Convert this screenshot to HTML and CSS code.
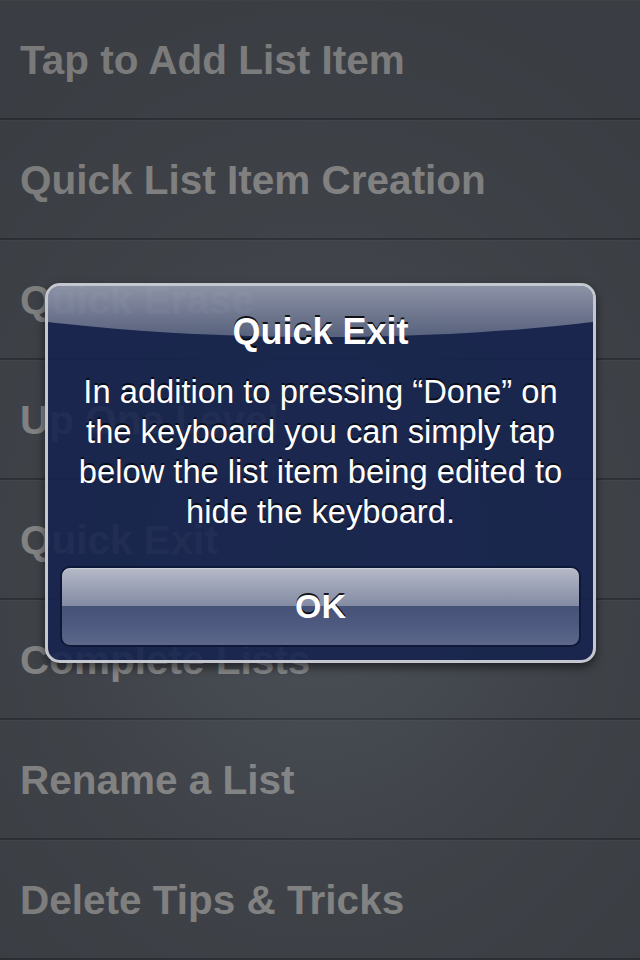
FILE: index.html
```html
<!DOCTYPE html>
<html lang="en">
<head>
	<meta charset="utf-8">
	<title>Tips &amp; Tricks</title>
	<link rel="stylesheet" href="styles.css">
</head>
<body>
	<section class="screen">
		<ul class="tipList">
			<li class="tipRow">Tap to Add List Item</li>
			<li class="tipRow">Quick List Item Creation</li>
			<li class="tipRow">Quick Erase</li>
			<li class="tipRow">Up One Level</li>
			<li class="tipRow">Quick Exit</li>
			<li class="tipRow">Complete Lists</li>
			<li class="tipRow">Rename a List</li>
			<li class="tipRow">Delete Tips &amp; Tricks</li>
		</ul>

		<div class="dimmer"></div>

		<div class="alertBox">
			<h1 class="alertBox_title">Quick Exit</h1>
			<p class="alertBox_message">In addition to pressing “Done” on the keyboard you can simply tap below the list item being edited to hide the keyboard.</p>
			<button class="alertBox_button">OK</button>
		</div>
	</section>
</body>
</html>
```

FILE: styles.css
```css
html, body{ width:100%; height:100%; margin:0px; overflow:hidden; font-family:"Liberation Sans", Arial, sans-serif; }
body{ background-color:rgb(66,70,76); }

.screen{ position:relative; width:640px; height:960px; overflow:hidden; }

.tipList{ list-style:none; margin:0; padding:0; }
.tipRow{
	box-sizing:border-box;
	height:120px;
	padding:0 20px;
	line-height:118px;
	font-size:40.5px; font-weight:bold;
	color:rgb(138,138,138);
	border-top:1px solid rgba(255,255,255,0.03);
	border-bottom:2px solid rgb(48,51,56);
	white-space:nowrap;
}

/* dark vignette behind the alert */
.dimmer{
	position:absolute; top:0; left:0; right:0; bottom:0;
	background:radial-gradient(ellipse 75% 60% at 50% 58%, rgba(120,130,145,0.18) 0%, rgba(0,0,0,0.06) 60%, rgba(0,0,0,0.12) 100%);
}

.alertBox{
	position:absolute; top:283px; left:45px;
	box-sizing:border-box;
	width:551px; height:380px;
	padding:24px 12px 0 12px;
	border:3px solid rgb(196,199,208);
	border-radius:15px;
	background-color:rgba(22,35,78,0.9);
	box-shadow:0 4px 10px rgba(0,0,0,0.55);
	overflow:hidden;
	text-align:center;
	color:rgb(255,255,255);
}
.alertBox::before{
	content:"";
	position:absolute; top:-173px; left:-50%;
	width:200%; height:224px;
	border-radius:50%;
	background:linear-gradient(rgba(255,255,255,0) 0%, rgba(255,255,255,0) 70%, rgba(255,255,255,0.5) 77%, rgba(255,255,255,0.27) 100%);
}
.alertBox_title{
	position:relative;
	margin:0;
	font-size:36px; line-height:44px; font-weight:bold;
	text-shadow:0 -2px 0 rgba(0,0,0,0.85);
}
.alertBox_message{
	position:relative;
	margin:18px 4px 0 4px;
	font-size:32.7px; line-height:40px;
	text-shadow:0 -2px 0 rgba(0,0,0,0.7);
}
.alertBox_button{
	display:block;
	box-sizing:border-box;
	width:100%; height:81px;
	margin-top:34px;
	border:2px solid rgb(14,24,56);
	border-radius:10px;
	background:linear-gradient(rgb(182,186,199) 0%, rgb(150,157,178) 30%, rgb(132,140,164) 49%, rgb(70,82,120) 50%, rgb(78,90,128) 75%, rgb(92,103,138) 100%);
	box-shadow:inset 0 1px 0 rgba(255,255,255,0.3);
	font-family:"Liberation Sans", Arial, sans-serif;
	font-size:34px; font-weight:bold;
	color:rgb(255,255,255);
	text-shadow:0 -2px 0 rgba(0,0,0,0.85);
}
```
